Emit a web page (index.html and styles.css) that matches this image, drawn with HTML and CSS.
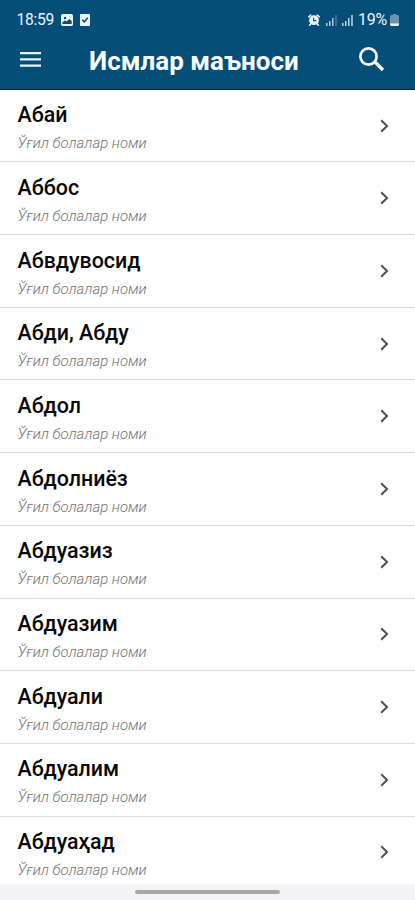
FILE: index.html
```html
<!DOCTYPE html>
<html lang="uz">
<head>
<meta charset="utf-8">
<meta name="viewport" content="width=device-width, initial-scale=1">
<title>Исмлар маъноси</title>
<link rel="stylesheet" href="styles.css">
</head>
<body>
<header class="header">
  <div class="status">
    <span class="clock">18:59</span>
    <svg class="photo" width="12" height="12" viewBox="0 0 12 12"><rect width="12" height="12" rx="1.8" fill="#e9f4ff"/><circle cx="4" cy="4" r="1.2" fill="#054e78"/><path d="M1.4 10V8.3l2.5-1.8 1.5 1 3-2.6 2.3 2.2V10z" fill="#054e78"/></svg>
    <svg class="task" width="10" height="12" viewBox="0 0 10 12"><rect width="10" height="12" rx=".8" fill="#e9f4ff"/><path d="M2.3 5.7l2 2.1 3.5-4" fill="none" stroke="#054e78" stroke-width="1.5"/></svg>
    <svg class="alarm" width="12" height="12" viewBox="0 0 12 12"><circle cx="6" cy="6.2" r="4.9" fill="#e9f4ff"/><path d="M.8 2.8L2.8 1M11.2 2.8L9.2 1M2.8 10l-1.2 1.2M9.2 10l1.2 1.2" stroke="#e9f4ff" stroke-width="1.6" stroke-linecap="round"/><path d="M5.6 3.8v2.8h2.6" fill="none" stroke="#054e78" stroke-width="1.1"/></svg>
    <svg class="signal" width="11" height="11" viewBox="0 0 11 11"><path d="M.8 8v3M3.8 6v5M6.8 3v8" stroke="#c6e1f4" stroke-width="1.3"/><path d="M10 0v11" stroke="#52819f" stroke-width="1.3"/></svg>
    <svg class="signal second" width="11" height="11" viewBox="0 0 11 11"><path d="M.8 8v3M3.8 6v5M6.8 3v8M10 0v11" stroke="#d6ebfa" stroke-width="1.3"/></svg>
    <span class="percent">19%</span>
    <svg class="battery" width="9" height="12" viewBox="0 0 9 12"><path d="M3 0h3v1h1.5Q9 1 9 2.5V10H0V2.5Q0 1 1.5 1H3z" fill="#6995b0"/><path d="M0 9.6h9v1Q9 12 7.6 12H1.4Q0 12 0 10.6z" fill="#f4faff"/></svg>
  </div>
  <div class="toolbar">
    <svg class="menu" width="21" height="15" viewBox="0 0 21 15"><path d="M0 1.2h21M0 7.4h21M0 13.6h21" stroke="#eaf6ff" stroke-width="2.2"/></svg>
    <h1 class="title">Исмлар маъноси</h1>
    <svg class="search" width="26" height="26" viewBox="0 0 26 26"><circle cx="9.5" cy="9.5" r="8.1" fill="none" stroke="#f8fcff" stroke-width="2.7"/><path d="M15.5 15.5l1.5 .5 7 7" fill="none" stroke="#f8fcff" stroke-width="3.3"/></svg>
  </div>
</header>
<main class="list"></main>
<footer class="nav"><div class="handle"></div></footer>
<template id="row">
  <article class="row">
    <div class="texts"><h2 class="name"></h2><p class="kind">Ўғил болалар номи</p></div>
    <svg class="chevron" width="9" height="14" viewBox="0 0 9 14"><path d="M1.2 1.2L7 7l-5.8 5.8" fill="none" stroke="#505050" stroke-width="2"/></svg>
  </article>
</template>
<script src="script.js"></script>
</body>
</html>
```
FILE: styles.css
```css
* { box-sizing: border-box; }
body {
  margin: 0;
  height: 900px;
  overflow: hidden;
  display: flex;
  flex-direction: column;
  background: #fff;
  font-family: Roboto, sans-serif;
}
h1, h2, p { margin: 0; }
svg { display: block; flex: none; }
.header {
  flex: none;
  height: 90px;
  background: #054e78;
  border-bottom: 1px solid #002354;
}
.status {
  height: 39px;
  padding: 1px 16px 0 16.5px;
  display: flex;
  align-items: center;
  color: #e9f4ff;
}
.clock { width: 37.5px; font-size: 15.7px; line-height: 18px; letter-spacing: -0.3px; white-space: nowrap; }
.photo { margin-left: 7px; }
.task { margin-left: 7px; }
.alarm { margin-left: auto; }
.signal { margin-left: 6px; }
.second { margin-left: 5px; }
.percent { width: 30px; margin-left: 5px; font-size: 16px; line-height: 18px; letter-spacing: -0.2px; }
.battery { margin-left: 2px; }
.toolbar {
  height: 42px;
  padding: 0 30px 0 20px;
  display: flex;
  align-items: center;
}
.menu { margin-bottom: 2px; }
.title {
  margin: 1px 0 0 48px;
  color: #f8fdff;
  font-size: 26px;
  line-height: 32px;
  font-weight: 700;
  white-space: nowrap;
}
.search { margin-left: auto; }
.list { flex: 1; min-height: 0; overflow: hidden; }
.row {
  height: 72.7px;
  padding: 0 26px 0 17.5px;
  display: flex;
  align-items: center;
  border-bottom: 1px solid #dcdcdc;
}
.row:first-child { height: 72.4px; }
.texts { flex: 1; padding-top: 4.4px; }
.name {
  font-size: 21.4px;
  line-height: 28px;
  font-weight: 500;
  color: #080808;
}
.kind {
  margin-top: 3px;
  font-size: 14.9px;
  line-height: 22px;
  font-style: italic;
  font-weight: 300;
  color: #727272;
}
.nav {
  flex: none;
  height: 16px;
  background: #f4f4f6;
  display: flex;
  justify-content: center;
  align-items: center;
}
.handle { width: 145px; height: 4px; border-radius: 2px; background: #a8a8a8; }
```
FILE: script.js
```js
const names = ["Абай", "Аббос", "Абвдувосид", "Абди, Абду", "Абдол", "Абдолниёз", "Абдуазиз", "Абдуазим", "Абдуали", "Абдуалим", "Абдуаҳад"];
const list = document.querySelector(".list");
const template = document.getElementById("row");
for (const name of names) {
  const row = template.content.cloneNode(true);
  row.querySelector(".name").textContent = name;
  list.append(row);
}
```
